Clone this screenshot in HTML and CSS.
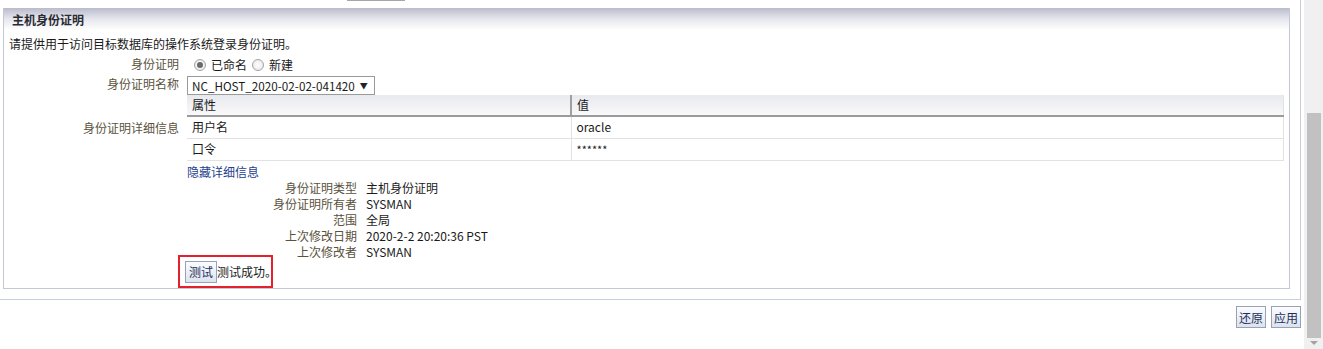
FILE: index.html
```html
<!DOCTYPE html>
<html lang="zh-CN">
<head>
    <meta charset="UTF-8">
    <title>主机身份证明</title>
    <link rel="stylesheet" href="styles.css">
</head>
<body>
    <div class="page">
        <div class="main">
            <div class="frame">
                <div class="stub"></div>
                <div class="panel">
                    <div class="panel-header">主机身份证明</div>
                    <div class="panel-body">
                        <p class="intro">请提供用于访问目标数据库的操作系统登录身份证明。</p>
                        <div class="form">
                            <div class="label row-radio">身份证明</div>
                            <div class="value row-radio">
                                <span class="radio checked"></span>
                                <span>已命名</span>
                                <span class="radio"></span>
                                <span>新建</span>
                            </div>

                            <div class="label row-select">身份证明名称</div>
                            <div class="value row-select">
                                <div class="select">
                                    <span>NC_HOST_2020-02-02-041420</span>
                                    <span class="caret">▼</span>
                                </div>
                            </div>

                            <div class="label row-table">身份证明详细信息</div>
                            <div class="value">
                                <table class="props">
                                    <thead>
                                        <tr><th class="col-name">属性</th><th>值</th></tr>
                                    </thead>
                                    <tbody>
                                        <tr><td>用户名</td><td>oracle</td></tr>
                                        <tr><td>口令</td><td class="secret">******</td></tr>
                                    </tbody>
                                </table>
                            </div>

                            <div></div>
                            <div class="value row-link"><a class="link" href="#">隐藏详细信息</a></div>

                            <div></div>
                            <div class="value">
                                <div class="details">
                                    <div class="d-label">身份证明类型</div><div>主机身份证明</div>
                                    <div class="d-label">身份证明所有者</div><div>SYSMAN</div>
                                    <div class="d-label">范围</div><div>全局</div>
                                    <div class="d-label">上次修改日期</div><div>2020-2-2 20:20:36 PST</div>
                                    <div class="d-label">上次修改者</div><div>SYSMAN</div>
                                </div>
                            </div>

                            <div></div>
                            <div class="value">
                                <div class="test-row">
                                    <button class="btn btn-test">测试</button>
                                    <span>测试成功。</span>
                                    <div class="highlight"></div>
                                </div>
                            </div>
                        </div>
                    </div>
                </div>
            </div>
            <div class="actions">
                <button class="btn">还原</button>
                <button class="btn">应用</button>
            </div>
        </div>
        <div class="scrollbar">
            <div class="thumb"></div>
            <div class="arrow"></div>
        </div>
    </div>
</body>
</html>
```

FILE: styles.css
```css
* {
    margin: 0;
    padding: 0;
    box-sizing: border-box;
}

body {
    font-family: "Noto Sans CJK SC", "Noto Sans", sans-serif;
    font-size: 12px;
    line-height: 16px;
    color: #1a1a1a;
    background: #ffffff;
    overflow: hidden;
}

.page {
    display: flex;
    height: 349px;
}

.main {
    width: 1304px;
}

.frame {
    width: 1301px;
    height: 300px;
    border-right: 1px solid #c9ccd9;
    border-bottom: 1px solid #c9ccd9;
}

.stub {
    margin-left: 347px;
    width: 58px;
    height: 1px;
    background: #a6a6a6;
}

.panel {
    margin: 7px 0 0 3px;
    width: 1287px;
    height: 281px;
    border: 1px solid #c4c7d4;
    border-top: none;
}

.panel-header {
    height: 22px;
    padding: 4px 0 0 8px;
    font-weight: bold;
    color: #2b2b33;
    background: linear-gradient(#b9bbcc, #e6e7ee 50%, #ffffff);
}

.panel-body {
    padding: 6px 5px 0 5px;
}

.intro {
    height: 20px;
}

.form {
    display: grid;
    grid-template-columns: 170px 1fr;
    column-gap: 8px;
}

.label {
    text-align: right;
    color: #5a5240;
    align-self: center;
}

.value {
    display: flex;
    align-items: center;
}

.row-radio {
    height: 18px;
    gap: 5px;
}

.row-select {
    height: 21px;
    padding-top: 2px;
}

.radio {
    width: 12px;
    height: 12px;
    border: 1px solid #a3a3a3;
    border-radius: 50%;
    background: radial-gradient(#ffffff, #e4e4e4);
    display: flex;
    align-items: center;
    justify-content: center;
}

.radio.checked {
    margin-left: 7px;
}

.radio.checked::after {
    content: "";
    width: 6px;
    height: 6px;
    border-radius: 50%;
    background: #6a6a6a;
}

.select {
    width: 188px;
    height: 19px;
    border: 1px solid #9a9a9a;
    padding: 0 4px 0 4px;
    display: flex;
    align-items: center;
    gap: 5px;
    line-height: 17px;
    font-size: 11.7px;
}

.caret {
    font-size: 8px;
    color: #222;
}

.props {
    width: 1097px;
    border-collapse: collapse;
    border-right: 1px solid #e2e2e2;
}

.props th {
    height: 21px;
    padding: 0 5px;
    text-align: left;
    font-weight: normal;
    background: linear-gradient(#e8e9ee, #f9f9fb);
    border-bottom: 2px solid #9b9b9b;
}

.props th.col-name {
    width: 384px;
    border-right: 2px solid #a0a0a0;
}

.props td {
    height: 22px;
    padding: 0 5px;
    border-bottom: 1px solid #e2e2e2;
}

.props td:first-child {
    border-right: 1px solid #e2e2e2;
}

.secret {
    font-size: 11px;
    vertical-align: top;
    padding-top: 2px !important;
}

.row-link {
    height: 19px;
    align-items: flex-end;
}

.link {
    color: #253f8e;
    text-decoration: none;
}

.details {
    display: grid;
    grid-template-columns: 170px 1fr;
    column-gap: 9px;
    grid-auto-rows: 16px;
}

.d-label {
    text-align: right;
    color: #5a5240;
}

.test-row {
    position: relative;
    display: flex;
    align-items: center;
    margin: 1px 0 0 -2px;
}

.btn {
    height: 22px;
    padding: 0 2px;
    font-family: inherit;
    font-size: 12px;
    color: #1d2f5e;
    border: 1px solid #97a2b7;
    background: linear-gradient(#fbfcfe, #dde3ee);
}

.btn-test {
    width: 32px;
    padding: 0;
}

.highlight {
    position: absolute;
    left: -7px;
    top: -6px;
    width: 95px;
    height: 33px;
    border: 2px solid #e3202b;
}

.actions {
    display: flex;
    justify-content: flex-end;
    gap: 5px;
    width: 1301px;
    margin-top: 6px;
}

.scrollbar {
    width: 19px;
    background: #f0f0f0;
}

.thumb {
    margin: 113px 0 0 3px;
    width: 14px;
    height: 225px;
    background: #c1c1c1;
}

.arrow {
    margin: 3px 0 0 6px;
    width: 0;
    height: 0;
    border-left: 4px solid transparent;
    border-right: 4px solid transparent;
    border-top: 4px solid #a3a3a3;
}
```
